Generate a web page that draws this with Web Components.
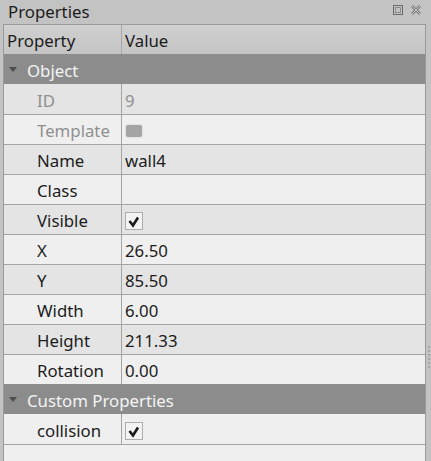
<!DOCTYPE html>
<html>
<head>
<meta charset="utf-8">
<style>
    html, body { margin: 0; height: 100%; overflow: hidden; background: #c3c3c3; }
    body { font-family: "Noto Sans", "Open Sans", sans-serif; font-size: 16.8px; color: #1c1c1c; }
</style>
</head>
<body>
<properties-dock title="Properties">
    <prop-head></prop-head>
    <prop-group label="Object"></prop-group>
    <prop-row name="ID" value="9" shade disabled first></prop-row>
    <prop-row name="Template" disabled><prop-swatch></prop-swatch></prop-row>
    <prop-row name="Name" value="wall4" shade></prop-row>
    <prop-row name="Class"></prop-row>
    <prop-row name="Visible" shade><prop-check></prop-check></prop-row>
    <prop-row name="X" value="26.50"></prop-row>
    <prop-row name="Y" value="85.50" shade></prop-row>
    <prop-row name="Width" value="6.00"></prop-row>
    <prop-row name="Height" value="211.33" shade></prop-row>
    <prop-row name="Rotation" value="0.00"></prop-row>
    <prop-group label="Custom Properties"></prop-group>
    <prop-row name="collision" first last><prop-check></prop-check></prop-row>
</properties-dock>

<script>
class PropertiesDock extends HTMLElement {
    constructor() {
        super();
        this.attachShadow({ mode: 'open' });
    }

    connectedCallback() {
        this.shadowRoot.innerHTML = `
            <style>
                :host { display: flex; flex-direction: column; height: 100vh; }
                .title {
                    display: flex;
                    justify-content: space-between;
                    height: 24px;
                    padding: 0 10px 0 8px;
                    flex: none;
                    line-height: 24px;
                }
                .buttons { display: flex; gap: 8px; padding-top: 5px; }
                .buttons svg { display: block; }
                .body {
                    flex: 1;
                    margin: 0 5px 0 3px;
                    border: 1px solid #9a9a9a;
                    border-bottom: 0;
                    background: #efefef;
                }
                .grip {
                    position: absolute;
                    right: 1px;
                    top: 346px;
                    width: 2px;
                    height: 24px;
                    background: repeating-linear-gradient(#a6a6a6 0 2px, transparent 2px 4px);
                }
            </style>
            <div class="title">
                <span>${this.getAttribute('title')}</span>
                <div class="buttons">
                    <svg width="10" height="10" viewBox="0 0 10 10" fill="none" stroke="#6a6a6a">
                        <rect x="0.5" y="0.5" width="9" height="9"/>
                        <rect x="2.5" y="2.5" width="5" height="5" stroke="#8a8a8a"/>
                    </svg>
                    <svg width="10" height="10" viewBox="0 0 10 10" fill="none">
                        <path d="M1 1L9 9M9 1L1 9" stroke="#757575" stroke-width="2.6"/>
                        <path d="M1 1L9 9M9 1L1 9" stroke="#d8d8d8" stroke-width="0.9"/>
                    </svg>
                </div>
            </div>
            <div class="body"><slot></slot></div>
            <div class="grip"></div>
        `;
    }
}

class PropHead extends HTMLElement {
    constructor() {
        super();
        this.attachShadow({ mode: 'open' });
        this.shadowRoot.innerHTML = `
            <style>
                :host {
                    display: grid;
                    grid-template-columns: 117px 1fr;
                    height: 29px;
                    background: linear-gradient(#d0d0d0, #c4c4c4);
                }
                div { display: flex; align-items: center; padding: 2px 0 0 3px; }
                div + div { border-left: 1px solid #a8a8a8; }
            </style>
            <div>Property</div><div>Value</div>
        `;
    }
}

class PropGroup extends HTMLElement {
    constructor() {
        super();
        this.attachShadow({ mode: 'open' });
    }

    connectedCallback() {
        this.shadowRoot.innerHTML = `
            <style>
                :host {
                    display: flex;
                    align-items: center;
                    gap: 10px;
                    height: 30px;
                    box-sizing: border-box;
                    padding: 3px 0 0 5px;
                    background: #8c8c8c;
                    color: #f4f4f4;
                }
                i {
                    width: 0; height: 0;
                    margin-top: -2px;
                    border: 4px solid transparent;
                    border-top: 5px solid #4c4c4c;
                    border-bottom: 0;
                }
            </style>
            <i></i><span>${this.getAttribute('label')}</span>
        `;
    }
}

class PropRow extends HTMLElement {
    constructor() {
        super();
        this.attachShadow({ mode: 'open' });
    }

    connectedCallback() {
        const value = this.getAttribute('value') || '';
        const first = this.hasAttribute('first');
        this.shadowRoot.innerHTML = `
            <style>
                :host {
                    display: grid;
                    grid-template-columns: 117px 1fr;
                    height: 30px;
                    box-sizing: border-box;
                    border-top: ${first ? '0' : '1px solid #a3a3a3'};
                    box-shadow: ${this.hasAttribute('last') ? '0 1px #a3a3a3' : 'none'};
                    background: ${this.hasAttribute('shade') ? '#e4e4e4' : '#efefef'};
                    color: ${this.hasAttribute('disabled') ? '#8f8f8f' : 'inherit'};
                }
                div { display: flex; align-items: center; padding-top: ${first ? 3 : 2}px; }
                .name { padding-left: 33px; }
                .value { border-left: 1px solid #a3a3a3; padding-left: 3px; }
            </style>
            <div class="name">${this.getAttribute('name')}</div>
            <div class="value">${value}<slot></slot></div>
        `;
    }
}

class PropCheck extends HTMLElement {
    constructor() {
        super();
        this.attachShadow({ mode: 'open' });
        this.shadowRoot.innerHTML = `
            <style>
                :host { display: block; width: 18px; height: 18px; }
                svg { display: block; }
            </style>
            <svg width="18" height="18" viewBox="0 0 18 18">
                <rect x="0.5" y="0.5" width="17" height="17" fill="#f2f2f2" stroke="#adadad"/>
                <path d="M4.5 9L8 13.5L13 5.5" fill="none" stroke="#1a1a1a" stroke-width="2.6"/>
            </svg>
        `;
    }
}

class PropSwatch extends HTMLElement {
    constructor() {
        super();
        this.attachShadow({ mode: 'open' });
        this.shadowRoot.innerHTML = `
            <style>
                :host {
                    display: block;
                    margin-left: 1px;
                    width: 16px;
                    height: 12px;
                    border-radius: 2px;
                    background: #a4a4a4;
                    box-shadow: 0 0 2px #c4c4c4;
                }
            </style>
        `;
    }
}

customElements.define('properties-dock', PropertiesDock);
customElements.define('prop-head', PropHead);
customElements.define('prop-group', PropGroup);
customElements.define('prop-row', PropRow);
customElements.define('prop-check', PropCheck);
customElements.define('prop-swatch', PropSwatch);
</script>
</body>
</html>
